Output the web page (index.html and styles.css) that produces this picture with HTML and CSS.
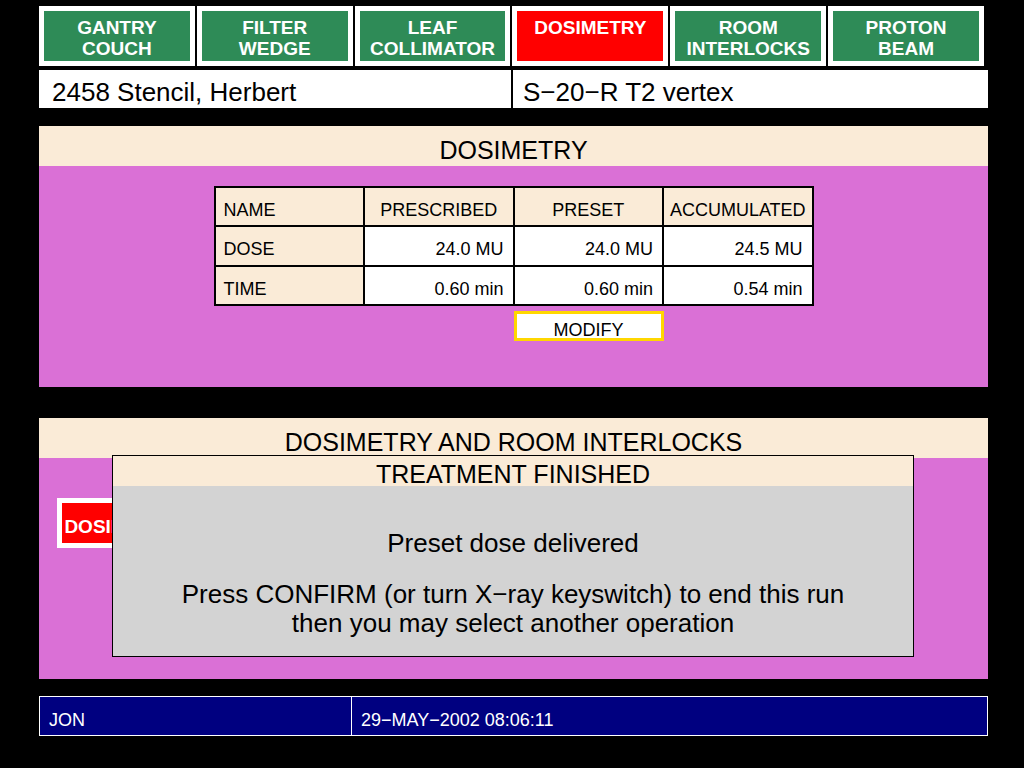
FILE: index.html
```html
<!DOCTYPE html>
<html lang="en">
<head>
<meta charset="utf-8">
<title>Dosimetry</title>
<link rel="stylesheet" href="styles.css">
</head>
<body>
<div class="screen">
  <nav class="tabs">
    <div class="tab"><div class="tab-face">GANTRY<br>COUCH</div></div>
    <div class="tab"><div class="tab-face">FILTER<br>WEDGE</div></div>
    <div class="tab"><div class="tab-face">LEAF<br>COLLIMATOR</div></div>
    <div class="tab"><div class="tab-face active">DOSIMETRY</div></div>
    <div class="tab"><div class="tab-face">ROOM<br>INTERLOCKS</div></div>
    <div class="tab"><div class="tab-face">PROTON<br>BEAM</div></div>
  </nav>

  <div class="patient">
    <div class="patient-cell patient-name">2458 Stencil, Herbert</div>
    <div class="patient-cell patient-field">S−20−R T2 vertex</div>
  </div>

  <section class="panel panel-dosimetry">
    <h2 class="panel-title">DOSIMETRY</h2>
    <div class="panel-body">
      <div class="dose-wrap">
        <div class="dose-table">
          <div class="cell head left">NAME</div>
          <div class="cell head center">PRESCRIBED</div>
          <div class="cell head center">PRESET</div>
          <div class="cell head center">ACCUMULATED</div>

          <div class="cell head left">DOSE</div>
          <div class="cell num">24.0 MU</div>
          <div class="cell num">24.0 MU</div>
          <div class="cell num">24.5 MU</div>

          <div class="cell head left">TIME</div>
          <div class="cell num">0.60 min</div>
          <div class="cell num">0.60 min</div>
          <div class="cell num">0.54 min</div>
        </div>
        <button class="modify" type="button">MODIFY</button>
      </div>
    </div>
  </section>

  <section class="panel panel-interlocks">
    <h2 class="panel-title">DOSIMETRY AND ROOM INTERLOCKS</h2>
    <div class="panel-body">
      <div class="alarm"><div class="alarm-face">DOSIMETRY</div></div>
    </div>
    <div class="dialog">
      <h3 class="dialog-title">TREATMENT FINISHED</h3>
      <div class="dialog-body">
        <p class="msg">Preset dose delivered</p>
        <p class="msg msg-action">Press CONFIRM (or turn X−ray keyswitch) to end this run<br>then you may select another operation</p>
      </div>
    </div>
  </section>

  <footer class="status">
    <div class="status-user">JON</div>
    <div class="status-time">29−MAY−2002 08:06:11</div>
  </footer>
</div>
</body>
</html>
```

FILE: styles.css
```css
html, body {
  margin: 0;
  padding: 0;
  background: #000;
}

body {
  width: 1024px;
  height: 768px;
  overflow: hidden;
  font-family: "Liberation Sans", Arial, Helvetica, sans-serif;
  color: #000;
}

.screen {
  padding: 6px 0 0 39px;
  width: 949px;
}

/* ---------- top navigation ---------- */
.tabs {
  display: flex;
  gap: 2px;
  width: 945px;
  height: 60px;
}

.tab {
  flex: 1;
  background: #fff;
  padding: 5px;
}

.tab-face {
  height: 50px;
  box-sizing: border-box;
  padding-top: 6px;
  background: #2e8b57;
  color: #fff;
  font-weight: bold;
  font-size: 19px;
  line-height: 21px;
  text-align: center;
  white-space: nowrap;
}

.tab-face.active {
  background: #ff0000;
}

/* ---------- patient row ---------- */
.patient {
  display: flex;
  gap: 2px;
  margin-top: 4px;
  height: 38px;
}

.patient-cell {
  background: #fff;
  height: 38px;
  box-sizing: border-box;
  padding-top: 6px;
  font-size: 26px;
  line-height: 32px;
  white-space: nowrap;
}

.patient-name {
  width: 472px;
  padding-left: 13px;
}

.patient-field {
  flex: 1;
  padding-left: 10px;
}

/* ---------- panels ---------- */
.panel {
  position: relative;
  width: 949px;
  margin-top: 18px;
}

.panel-interlocks {
  margin-top: 31px;
}

.panel-title {
  margin: 0;
  height: 40px;
  box-sizing: border-box;
  padding-top: 8px;
  background: #faebd7;
  font-size: 25px;
  font-weight: normal;
  line-height: 32px;
  text-align: center;
  white-space: nowrap;
}

.panel-body {
  height: 221px;
  box-sizing: border-box;
  background: #da70d6;
}

.panel-dosimetry .panel-body {
  padding-top: 20px;
}

.panel-interlocks .panel-body {
  padding: 40px 0 0 18px;
}

/* ---------- dosimetry table ---------- */
.dose-wrap {
  width: 600px;
  margin: 0 auto;
}

.dose-table {
  display: grid;
  grid-template-columns: repeat(4, 1fr);
  grid-template-rows: repeat(3, 1fr);
  gap: 2px;
  padding: 2px;
  height: 120px;
  box-sizing: border-box;
  background: #000;
}

.cell {
  background: #fff;
  padding-top: 7px;
  font-size: 18px;
  line-height: 30px;
  white-space: nowrap;
}

.cell.head {
  background: #faebd7;
}

.cell.left {
  padding-left: 8px;
}

.cell.center {
  text-align: center;
}

.cell.num {
  text-align: right;
  padding-right: 9px;
}

.modify {
  display: block;
  width: 150px;
  height: 30px;
  margin: 5px 0 0 300px;
  box-sizing: border-box;
  padding: 8px 0 0;
  border: 3px solid #ffd700;
  background: #fff;
  color: #000;
  font-family: "Liberation Sans", Arial, sans-serif;
  font-size: 18px;
  line-height: 14px;
  text-align: center;
  border-radius: 0;
}

/* ---------- alarm button ---------- */
.alarm {
  width: 127px;
  box-sizing: border-box;
  padding: 5px;
  background: #fff;
}

.alarm-face {
  height: 40px;
  box-sizing: border-box;
  padding-top: 7px;
  background: #ff0000;
  color: #fff;
  font-size: 19px;
  font-weight: bold;
  line-height: 33px;
  text-align: center;
  white-space: nowrap;
  overflow: hidden;
}

/* ---------- dialog ---------- */
.dialog {
  position: absolute;
  top: 37px;
  left: 73px;
  width: 802px;
  height: 202px;
  box-sizing: border-box;
  border: 1px solid #000;
  background: #d3d3d3;
}

.dialog-title {
  margin: 0;
  height: 30px;
  box-sizing: border-box;
  padding-top: 7px;
  background: #faebd7;
  font-size: 25px;
  font-weight: normal;
  line-height: 23px;
  text-align: center;
}

.dialog-body {
  padding-top: 43px;
  font-size: 26px;
  line-height: 29px;
  text-align: center;
}

.msg {
  margin: 0;
}

.msg-action {
  margin-top: 22px;
}

/* ---------- status bar ---------- */
.status {
  display: flex;
  width: 949px;
  height: 40px;
  margin-top: 17px;
  box-sizing: border-box;
  border: 1px solid #fff;
  background: #000080;
  color: #fff;
  font-size: 18px;
}

.status-user {
  width: 312px;
  box-sizing: border-box;
  border-right: 1px solid #fff;
  padding: 8px 0 0 9px;
  line-height: 30px;
}

.status-time {
  padding: 8px 0 0 9px;
  line-height: 30px;
}
```
